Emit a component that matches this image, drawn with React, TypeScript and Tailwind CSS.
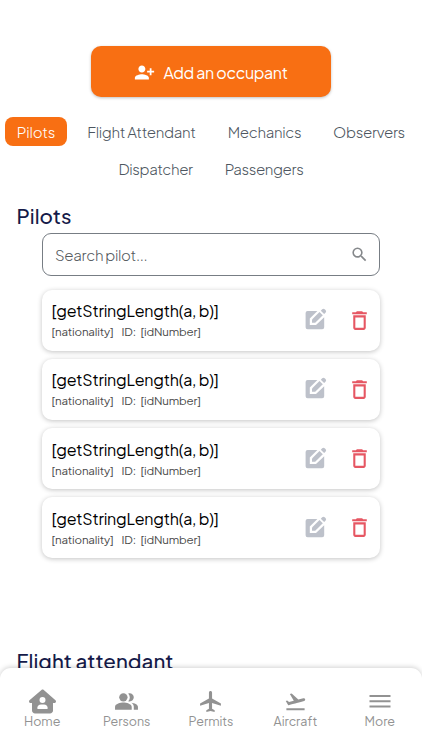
import React from 'react';
import {
  MdPersonAddAlt1,
  MdSearch,
  MdDeleteOutline,
  MdPeopleAlt,
  MdLocalAirport,
  MdFlightTakeoff,
} from 'react-icons/md';
import { FaHouseUser } from 'react-icons/fa6';

function EditIcon() {
  return (
    <svg width="22" height="22" viewBox="0 0 22 22" fill="none">
      <path
        d="M2.6 3H12.4L4.8 10.6V17H11L19.2 9.2V19.2A2 2 0 0 1 17.2 21.2H2.6A2 2 0 0 1 .6 19.2V5A2 2 0 0 1 2.6 3Z"
        fill="#bdc1ca"
      />
      <path d="M7 11.5L14.5 4L17.8 7.3L10.2 14.8H7Z" fill="#bdc1ca" />
      <path d="M15.8 2.7L17.2 1.3Q18.5.2 19.7 1.3L20.5 2.1Q21.8 3.4 20.5 4.7L19.1 6Z" fill="#bdc1ca" />
    </svg>
  );
}

function MenuIcon() {
  return (
    <svg width="22" height="24" viewBox="0 0 22 24" fill="none" stroke="#929292" strokeWidth="2">
      <path d="M.5 7H21.5M.5 12.2H21.5M.5 17.4H21.5" />
    </svg>
  );
}

function PilotCard() {
  return (
    <div className="flex h-[61px] items-center rounded-[10px] bg-white pl-[9.5px] pr-[8px] shadow-[0_1px_5px_rgba(0,0,0,0.24)]">
      <div className="flex-1 whitespace-nowrap">
        <div className="pt-[1px] text-[16px] leading-[21px] tracking-[-0.21px] text-black">[getStringLength(a, b)]</div>
        <div className="flex pt-[1px] text-[11.5px] leading-[19px] tracking-[-0.15px] text-[#494949]">
          <span className="w-[70px]">[nationality]</span>
          <span className="w-[19px]">ID:</span>
          <span>[idNumber]</span>
        </div>
      </div>
      <div className="mr-[20px] -mt-[2px]"><EditIcon /></div>
      <MdDeleteOutline size={25} color="#e65763" />
    </div>
  );
}

const navItems = [
  { label: 'Home', icon: <FaHouseUser size={27} /> },
  { label: 'Persons', icon: <MdPeopleAlt size={25} /> },
  { label: 'Permits', icon: <MdLocalAirport size={25} /> },
  { label: 'Aircraft', icon: <MdFlightTakeoff size={23} /> },
  { label: 'More', icon: <MenuIcon /> },
];

export default function App() {
  return (
    <div className="relative h-[750px] w-[422px] overflow-hidden bg-white font-['Plus_Jakarta_Sans',Inter,sans-serif]">
      <div className="flex justify-center pt-[46px]">
        <button className="flex h-[51px] w-[240px] items-center justify-center gap-[8px] rounded-[10px] bg-[#f86f13] pt-[2px] text-[16px] text-white shadow-[0_1px_3px_rgba(0,0,0,0.25)]">
          <MdPersonAddAlt1 size={21} />
          <span className="whitespace-nowrap tracking-[-0.35px]">Add an occupant</span>
        </button>
      </div>

      <div className="mt-[20px] flex h-[29px] items-center whitespace-nowrap pl-[5px] text-[15px] font-light text-[#4d5660]">
        <div className="flex h-[29px] w-[62px] items-center justify-center rounded-[8px] bg-[#f86f13] pt-[1px] tracking-[-0.2px] text-white">Pilots</div>
        <div className="ml-[20px] flex w-[109px] justify-center pt-[1px] tracking-[-0.32px]">Flight Attendant</div>
        <div className="ml-[32px] flex w-[73px] justify-center pt-[1px] tracking-[-0.35px]">Mechanics</div>
        <div className="ml-[32px] flex w-[72px] justify-center pt-[1px] tracking-[-0.35px]">Observers</div>
      </div>
      <div className="mt-[8px] flex h-[29px] items-center justify-center gap-[32px] whitespace-nowrap pt-[1px] text-[15px] font-light tracking-[-0.4px] text-[#4d5660]">
        <div>Dispatcher</div>
        <div>Passengers</div>
      </div>

      <h2 className="mt-[18px] pl-[16.5px] text-[20.5px] font-medium leading-[30px] tracking-[0.05px] text-[#151a49]">Pilots</h2>
      <div className="mx-[42px] mt-[2px] flex h-[43px] items-center rounded-[9px] border border-[#777d84] pl-[12px] pr-[10px] text-[#55595e]">
        <span className="flex-1 pt-[2px] text-[15px] font-light tracking-[-0.33px]">Search pilot...</span>
        <MdSearch size={19} color="#85888b" />
      </div>

      <div className="mx-[42px] mt-[13.8px] flex flex-col gap-[8.2px]">
        <PilotCard />
        <PilotCard />
        <PilotCard />
        <PilotCard />
      </div>

      <h2 className="mt-[87.6px] pl-[16.5px] text-[20.5px] font-medium leading-[30px] tracking-[0.05px] text-[#151a49]">Flight attendant</h2>

      <nav className="absolute inset-x-0 bottom-0 grid h-[82px] grid-cols-5 rounded-t-[11px] bg-white pt-[20px] text-[#929292] shadow-[0_-1px_5px_rgba(0,0,0,0.18)]">
        {navItems.map((item) => (
          <div key={item.label} className="flex flex-col items-center">
            <div className="flex h-[26px] items-center justify-center">{item.icon}</div>
            <div className="text-[12.5px] leading-[15px] tracking-[-0.05px]">{item.label}</div>
          </div>
        ))}
      </nav>
    </div>
  );
}
